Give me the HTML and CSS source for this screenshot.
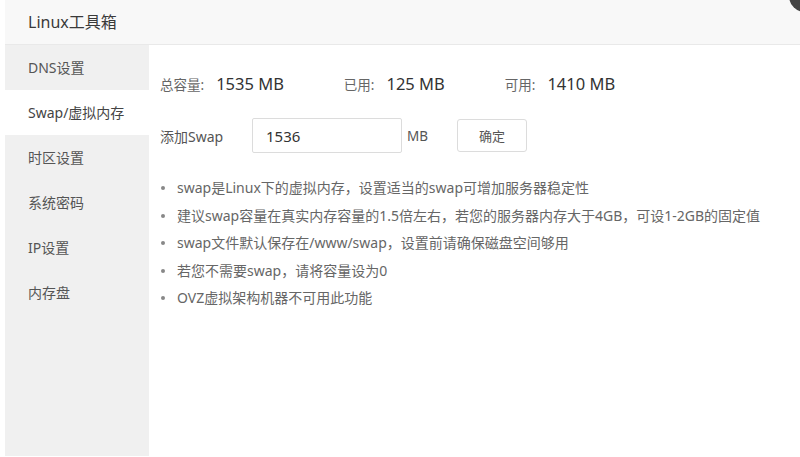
FILE: index.html
```html
<!DOCTYPE html>
<html lang="zh-CN">
<head>
<meta charset="utf-8">
<title>Linux工具箱</title>
<link rel="stylesheet" href="styles.css">
</head>
<body>
<div class="win">
  <div class="header">Linux工具箱<span class="close"></span></div>
  <div class="main">
    <ul class="side">
      <li class="item">DNS设置</li>
      <li class="item active">Swap/虚拟内存</li>
      <li class="item">时区设置</li>
      <li class="item">系统密码</li>
      <li class="item">IP设置</li>
      <li class="item">内存盘</li>
    </ul>
    <div class="content">
      <div class="stats">
        <div class="stat"><span class="label">总容量:</span><span class="value">1535 MB</span></div>
        <div class="stat"><span class="label">已用:</span><span class="value">125 MB</span></div>
        <div class="stat"><span class="label">可用:</span><span class="value">1410 MB</span></div>
      </div>
      <div class="addrow">
        <span class="addlabel">添加Swap</span>
        <input class="size" type="text" value="1536">
        <span class="unit">MB</span>
        <button class="btn">确定</button>
      </div>
      <ul class="tips">
        <li>swap是Linux下的虚拟内存，设置适当的swap可增加服务器稳定性</li>
        <li>建议swap容量在真实内存容量的1.5倍左右，若您的服务器内存大于4GB，可设1-2GB的固定值</li>
        <li>swap文件默认保存在/www/swap，设置前请确保磁盘空间够用</li>
        <li>若您不需要swap，请将容量设为0</li>
        <li>OVZ虚拟架构机器不可用此功能</li>
      </ul>
    </div>
  </div>
</div>
</body>
</html>
```
FILE: styles.css
```css
html, body {
  margin: 0;
  padding: 0;
  background: #ffffff;
  font-family: "Noto Sans", "Noto Sans CJK SC", sans-serif;
}
html {
  overflow: hidden;
}
body {
  width: 800px;
  height: 457px;
}
.win {
  margin-left: 5px;
  height: 456px;
  display: flex;
  flex-direction: column;
  background: #fff;
}
.header {
  position: relative;
  height: 44px;
  line-height: 44px;
  padding-left: 23px;
  font-size: 16px;
  color: #3a3a3a;
  background: #f8f8f8;
  border-bottom: 1px solid #e9e9e9;
  flex: none;
}
.close {
  position: absolute;
  right: -21px;
  top: -20px;
  width: 32px;
  height: 32px;
  border-radius: 50%;
  background: #444;
}
.main {
  flex: 1;
  display: flex;
}
.side {
  list-style: none;
  margin: 0;
  padding: 0;
  width: 144px;
  background: #f0f0f0;
  flex: none;
}
.item {
  height: 45px;
  line-height: 45px;
  padding-left: 23px;
  font-size: 14px;
  color: #555;
}
.item.active {
  background: #fff;
  color: #444;
}
.content {
  flex: 1;
  padding: 27px 0 0 11px;
}
.stats {
  display: flex;
  align-items: baseline;
  height: 24px;
  line-height: 24px;
}
.stat {
  margin-right: 60px;
}
.label {
  font-size: 13.5px;
  color: #666;
}
.value {
  font-size: 16.5px;
  color: #333;
  margin-left: 12px;
}
.addrow {
  margin-top: 22px;
  display: flex;
  align-items: center;
  height: 35px;
}
.addlabel {
  width: 92px;
  font-size: 14px;
  color: #555;
}
.size {
  box-sizing: border-box;
  width: 150px;
  height: 35px;
  border: 1px solid #dcdcdc;
  border-radius: 2px;
  padding: 0 0 0 13px;
  font-family: inherit;
  font-size: 15px;
  color: #333;
  outline: none;
}
.unit {
  margin-left: 5px;
  width: 50px;
  font-size: 13.5px;
  color: #555;
}
.btn {
  box-sizing: border-box;
  width: 70px;
  height: 33px;
  border: 1px solid #dcdcdc;
  border-radius: 3px;
  background: #fff;
  font-family: inherit;
  font-size: 13px;
  color: #555;
  padding: 0;
}
.tips {
  list-style: none;
  margin: 21px 0 0 0;
  padding: 0;
}
.tips li {
  position: relative;
  padding-left: 17px;
  height: 27.5px;
  line-height: 27.5px;
  font-size: 14px;
  color: #666;
}
.tips li::before {
  content: "";
  position: absolute;
  left: 1px;
  top: 12px;
  width: 4px;
  height: 4px;
  border-radius: 50%;
  background: #888;
}
```
